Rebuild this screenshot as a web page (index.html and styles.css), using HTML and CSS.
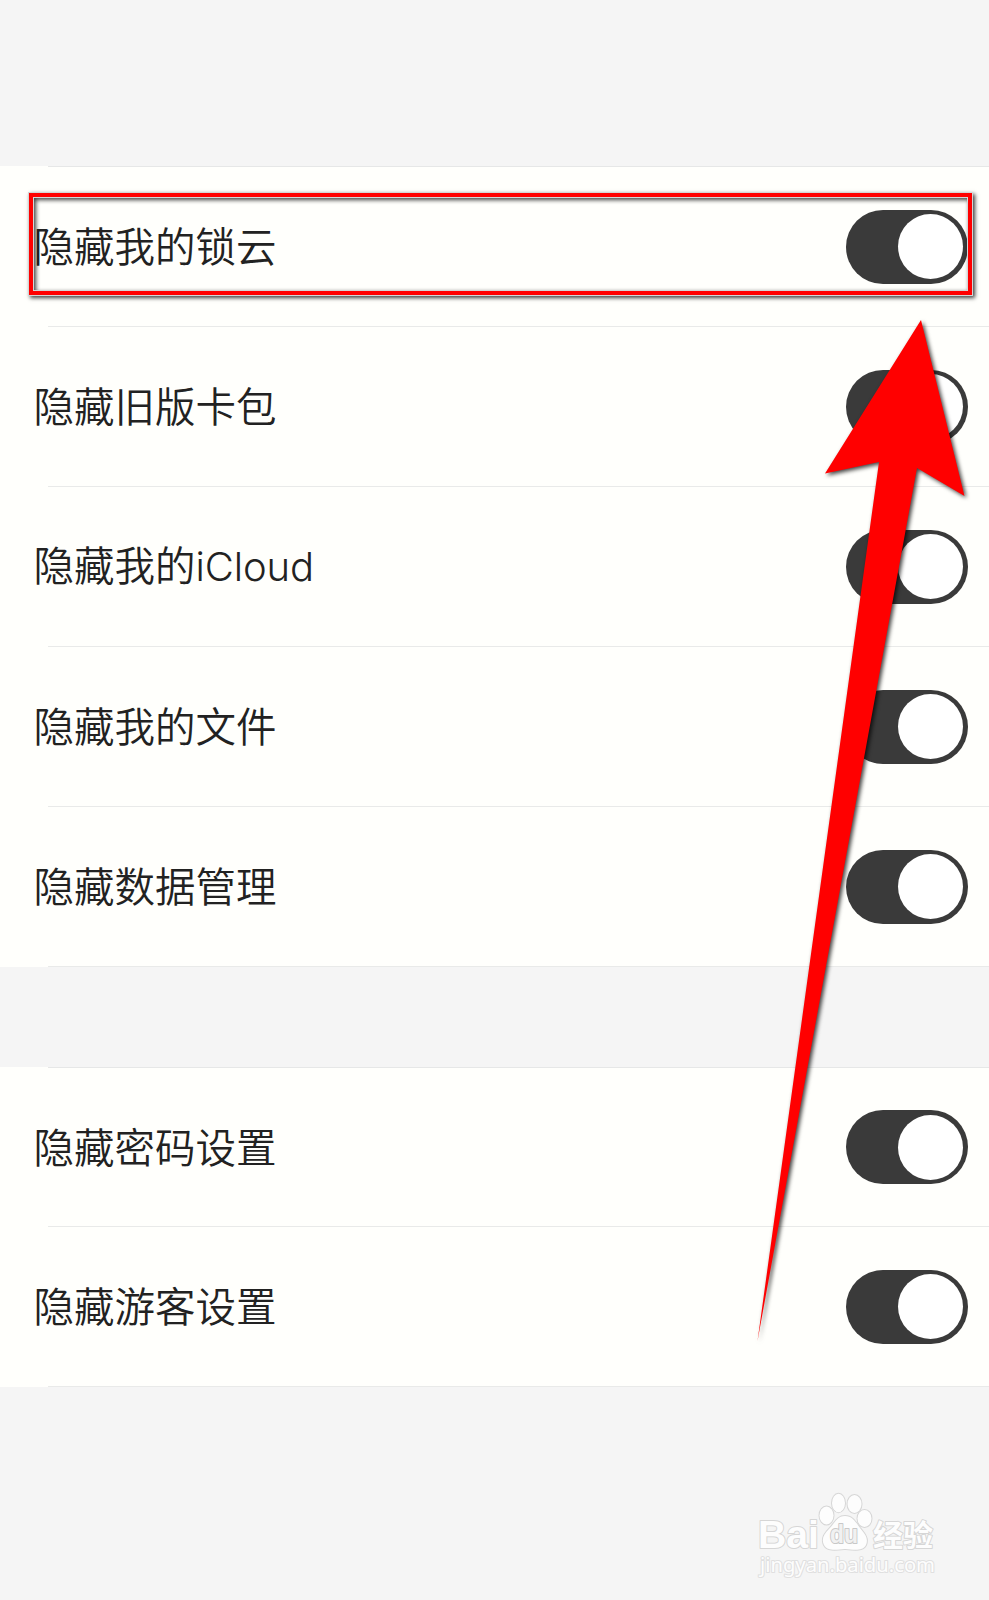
FILE: index.html
```
<!DOCTYPE html>
<html lang="zh-CN">
<head>
    <meta charset="UTF-8">
    <meta name="viewport" content="width=device-width, initial-scale=1.0">
    <title>隐藏设置</title>
    <link rel="stylesheet" href="styles.css">
</head>
<body>
    <main class="settings">
        <section class="group">
            <label class="row"><span class="name">隐藏我的锁云</span><span class="toggle"></span></label>
            <label class="row"><span class="name">隐藏旧版卡包</span><span class="toggle"></span></label>
            <label class="row"><span class="name">隐藏我的<span class="latin">iCloud</span></span><span class="toggle"></span></label>
            <label class="row"><span class="name">隐藏我的文件</span><span class="toggle"></span></label>
            <label class="row"><span class="name">隐藏数据管理</span><span class="toggle"></span></label>
        </section>
        <section class="group">
            <label class="row"><span class="name">隐藏密码设置</span><span class="toggle"></span></label>
            <label class="row"><span class="name">隐藏游客设置</span><span class="toggle"></span></label>
        </section>
    </main>

    <div class="highlight"></div>

    <svg class="arrow" width="989" height="1600" viewBox="0 0 989 1600">
        <path d="M921 320 L964.5 496 L917 468 L757.5 1341 L879 462 L825 473.5 Z" fill="#ff0000"/>
    </svg>

    <svg class="watermark" width="240" height="140" viewBox="0 0 240 140">
        <g class="mark">
            <text class="brand" x="28" y="88" textLength="61" lengthAdjust="spacingAndGlyphs">Bai</text>
            <ellipse cx="96.5" cy="55.5" rx="7" ry="9"/>
            <ellipse cx="108.5" cy="43" rx="6.5" ry="9.2"/>
            <ellipse cx="124.5" cy="44" rx="7" ry="9"/>
            <ellipse cx="134.5" cy="58.5" rx="7" ry="8.5"/>
            <path d="M115 56 C107 56 105 63 99 69 C94 74 91 79 94 85 C97 91 105 90 115 89 C125 90 133 91 136 85 C139 78 134 73 130 68 C125 61 122 56 115 56 Z"/>
            <text class="du" x="100" y="83" textLength="28" lengthAdjust="spacingAndGlyphs">du</text>
            <text class="cn" x="143" y="86" textLength="60" lengthAdjust="spacingAndGlyphs">经验</text>
            <text class="url" x="30" y="112" textLength="175" lengthAdjust="spacingAndGlyphs">jingyan.baidu.com</text>
        </g>
    </svg>
</body>
</html>
```
FILE: styles.css
```
* {
    box-sizing: border-box;
}
body {
    position: relative;
    margin: 0;
    width: 989px;
    height: 1600px;
    overflow: hidden;
    background: #f5f5f5;
    color: #222;
    font-family: "Noto Sans CJK SC", sans-serif;
}
.settings {
    display: flex;
    flex-direction: column;
    gap: 100px;
    padding-top: 166px;
}
.group {
    padding-top: 1px;
    background: linear-gradient(#e6e7e7, #e6e7e7) 48px 0 / 100% 1px no-repeat #fffffc;
}
.row {
    display: flex;
    align-items: center;
    justify-content: space-between;
    height: 160px;
    padding: 0 21.5px 1px 33.5px;
    background: linear-gradient(#e9eae9, #e9eae9) 48px 100% / 100% 1px no-repeat;
}
.group:last-child .row:first-of-type {
    height: 159px;
}
.name {
    padding-bottom: 3px;
    font-size: 40.5px;
    font-weight: 350;
    line-height: 60px;
}
.latin {
    font-family: Inter, sans-serif;
    font-size: 40px;
    font-weight: 350;
    letter-spacing: -0.1px;
}
.toggle {
    display: flex;
    align-items: center;
    justify-content: flex-end;
    width: 121.5px;
    height: 74px;
    padding-right: 4.5px;
    border-radius: 37px;
    background: #3a3a3a;
}
.toggle::after {
    content: "";
    width: 65px;
    height: 65px;
    border-radius: 50%;
    background: #fff;
}

/* annotations */
.highlight {
    position: absolute;
    left: 29px;
    top: 193px;
    width: 943px;
    height: 102px;
    border: 4px solid #ff0000;
    box-shadow: 0 0 0 1px #d3d6d6, 2px 2px 4px 1px rgba(0, 0, 0, .75), inset 0 0 0 1px #d3d6d6, inset 2px 2px 4px 1px rgba(0, 0, 0, .75);
}
.arrow {
    position: absolute;
    left: 0;
    top: 0;
    filter: drop-shadow(2px 2px 2px rgba(0, 0, 0, .75));
}
.watermark {
    position: absolute;
    left: 730px;
    top: 1460px;
}
.mark {
    fill: #fdfdfd;
    stroke: #d6d6d6;
    stroke-width: 2px;
    paint-order: stroke;
    stroke-linejoin: round;
}
.brand {
    font: bold 39px "Liberation Sans", sans-serif;
}
.du {
    font: bold 25px "Liberation Sans", sans-serif;
    fill: #f1f1f1;
    stroke: #c8c8c8;
}
.cn {
    font: bold 30px "Noto Sans CJK SC", sans-serif;
}
.url {
    font: 19px "Noto Sans", sans-serif;
    stroke: #e0e0e0;
}
```
